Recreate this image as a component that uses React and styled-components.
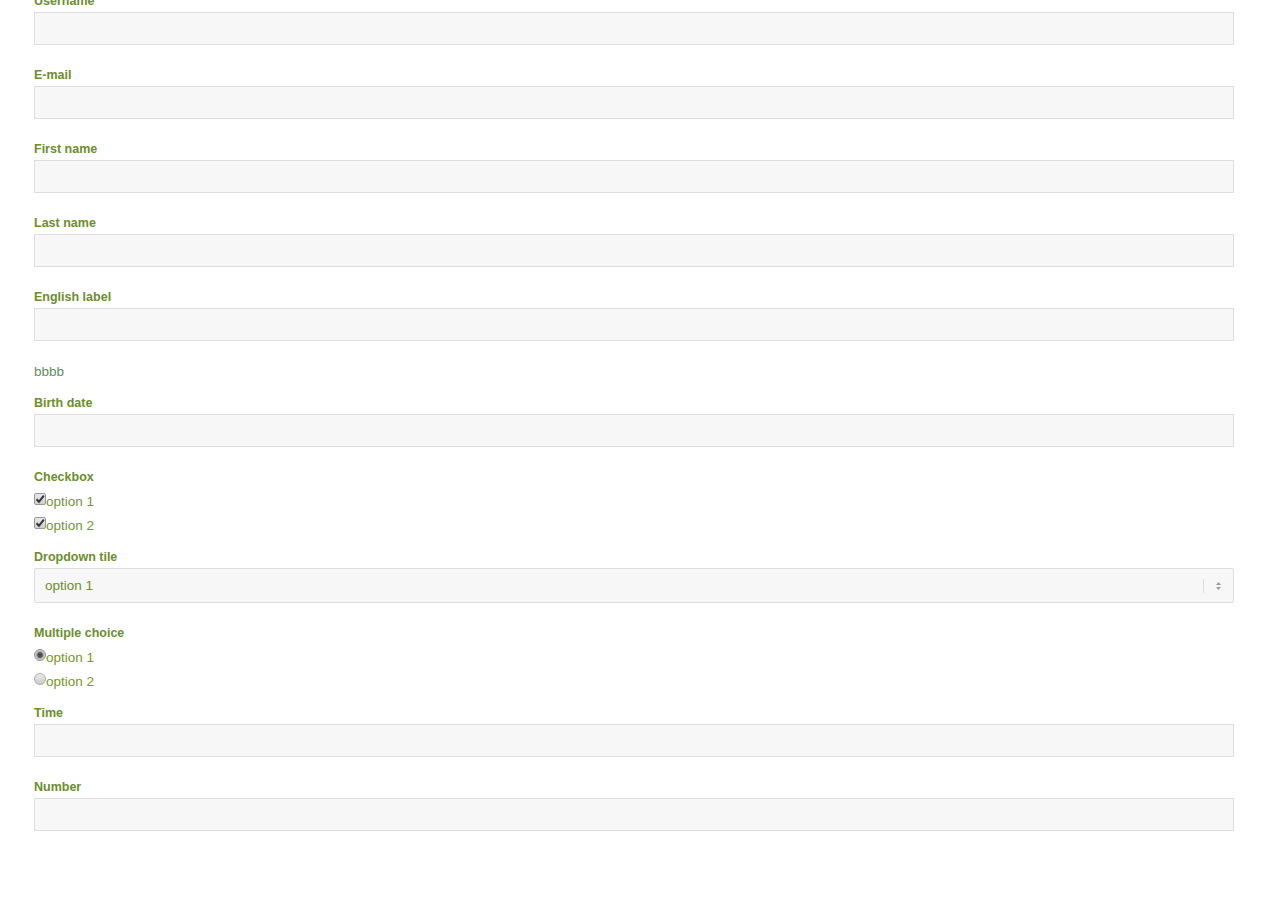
import React from "react";
import styled, { createGlobalStyle } from "styled-components";

const Global = createGlobalStyle`
  html, body { margin: 0; padding: 0; background: #fff; }
  body { font-family: "Liberation Sans", Arial, sans-serif; }
`;

const Form = styled.form`
  margin-top: -8px;
  padding: 0 37px 60px 34px;
  display: flex;
  flex-direction: column;
`;

const Field = styled.div`
  display: flex;
  flex-direction: column;
  margin-bottom: ${(p) => (p.$group ? 12 : 21)}px;
`;

const Label = styled.label`
  display: block;
  font-size: 12.5px;
  font-weight: bold;
  line-height: 18px;
  color: #6c8e2b;
  margin-bottom: 2px;
`;

const Input = styled.input`
  box-sizing: border-box;
  width: 100%;
  height: 33px;
  margin: 0;
  padding: 0 10px;
  background: #f7f7f7;
  border: 1px solid #dedede;
  border-radius: 0;
  font-family: "Liberation Sans", Arial, sans-serif;
  font-size: 13px;
  color: #6c8e2b;
  outline: none;
`;

const Note = styled.p`
  margin: 0 0 13px;
  padding-top: 1px;
  font-size: 13.5px;
  line-height: 18px;
  color: #5f8d62;
`;

const OptionRow = styled.label`
  display: flex;
  align-items: flex-start;
  box-sizing: border-box;
  height: 24px;
  padding-top: 4px;
  line-height: 20px;
  font-size: 13.5px;
  color: #76982a;
`;

const Check = styled.span`
  box-sizing: border-box;
  width: 12px;
  height: 12px;
  margin-top: 1px;
  border: 1px solid #9a9a9a;
  border-radius: 2px;
  background: linear-gradient(#e8e8e8, #cfcfcf);
  display: flex;
  align-items: center;
  justify-content: center;
  flex: none;
`;

const Radio = styled.span`
  box-sizing: border-box;
  width: 12px;
  height: 12px;
  margin-top: 1px;
  border: 1px solid ${(p) => (p.$on ? "#8f8f8f" : "#ababab")};
  border-radius: 50%;
  background: ${(p) =>
    p.$on
      ? "radial-gradient(circle, #505050 0 2.3px, #a4a4a4 3.2px, #dcdcdc 5px)"
      : "linear-gradient(#ececec, #cbcbcb)"};
  flex: none;
`;

const SelectBox = styled.div`
  box-sizing: border-box;
  height: 35px;
  display: flex;
  align-items: center;
  background: #f7f7f7;
  border: 1px solid #dedede;
  border-radius: 2px;
  padding-left: 10px;
  font-size: 13.5px;
  color: #6c8e2b;
`;

const SelectValue = styled.span`
  flex: 1;
`;

const SelectArrows = styled.span`
  width: 29px;
  height: 14px;
  border-left: 1px solid #dcdcdc;
  display: flex;
  align-items: center;
  justify-content: center;
`;

const CheckMark = () => (
  <svg width="10" height="10" viewBox="0 0 10 10">
    <path d="M1.5 5.2 L4 7.8 L8.8 1.6" fill="none" stroke="#333" strokeWidth="2" />
  </svg>
);

const Arrows = () => (
  <svg width="7" height="10" viewBox="0 0 7 10">
    <path d="M3.5 1 L6 4 L1 4 Z" fill="#9a9a9a" />
    <path d="M3.5 9 L6 6 L1 6 Z" fill="#9a9a9a" />
  </svg>
);

const TextField = ({ label }) => (
  <Field>
    <Label>{label}</Label>
    <Input type="text" />
  </Field>
);

export default function App() {
  return (
    <>
      <Global />
      <Form>
        <TextField label="Username" />
        <TextField label="E-mail" />
        <TextField label="First name" />
        <TextField label="Last name" />
        <TextField label="English label" />
        <Note>bbbb</Note>
        <TextField label="Birth date" />
        <Field $group>
          <Label>Checkbox</Label>
          <OptionRow>
            <Check><CheckMark /></Check>option 1
          </OptionRow>
          <OptionRow>
            <Check><CheckMark /></Check>option 2
          </OptionRow>
        </Field>
        <Field>
          <Label>Dropdown tile</Label>
          <SelectBox>
            <SelectValue>option 1</SelectValue>
            <SelectArrows><Arrows /></SelectArrows>
          </SelectBox>
        </Field>
        <Field $group>
          <Label>Multiple choice</Label>
          <OptionRow>
            <Radio $on />option 1
          </OptionRow>
          <OptionRow>
            <Radio />option 2
          </OptionRow>
        </Field>
        <TextField label="Time" />
        <TextField label="Number" />
      </Form>
    </>
  );
}
